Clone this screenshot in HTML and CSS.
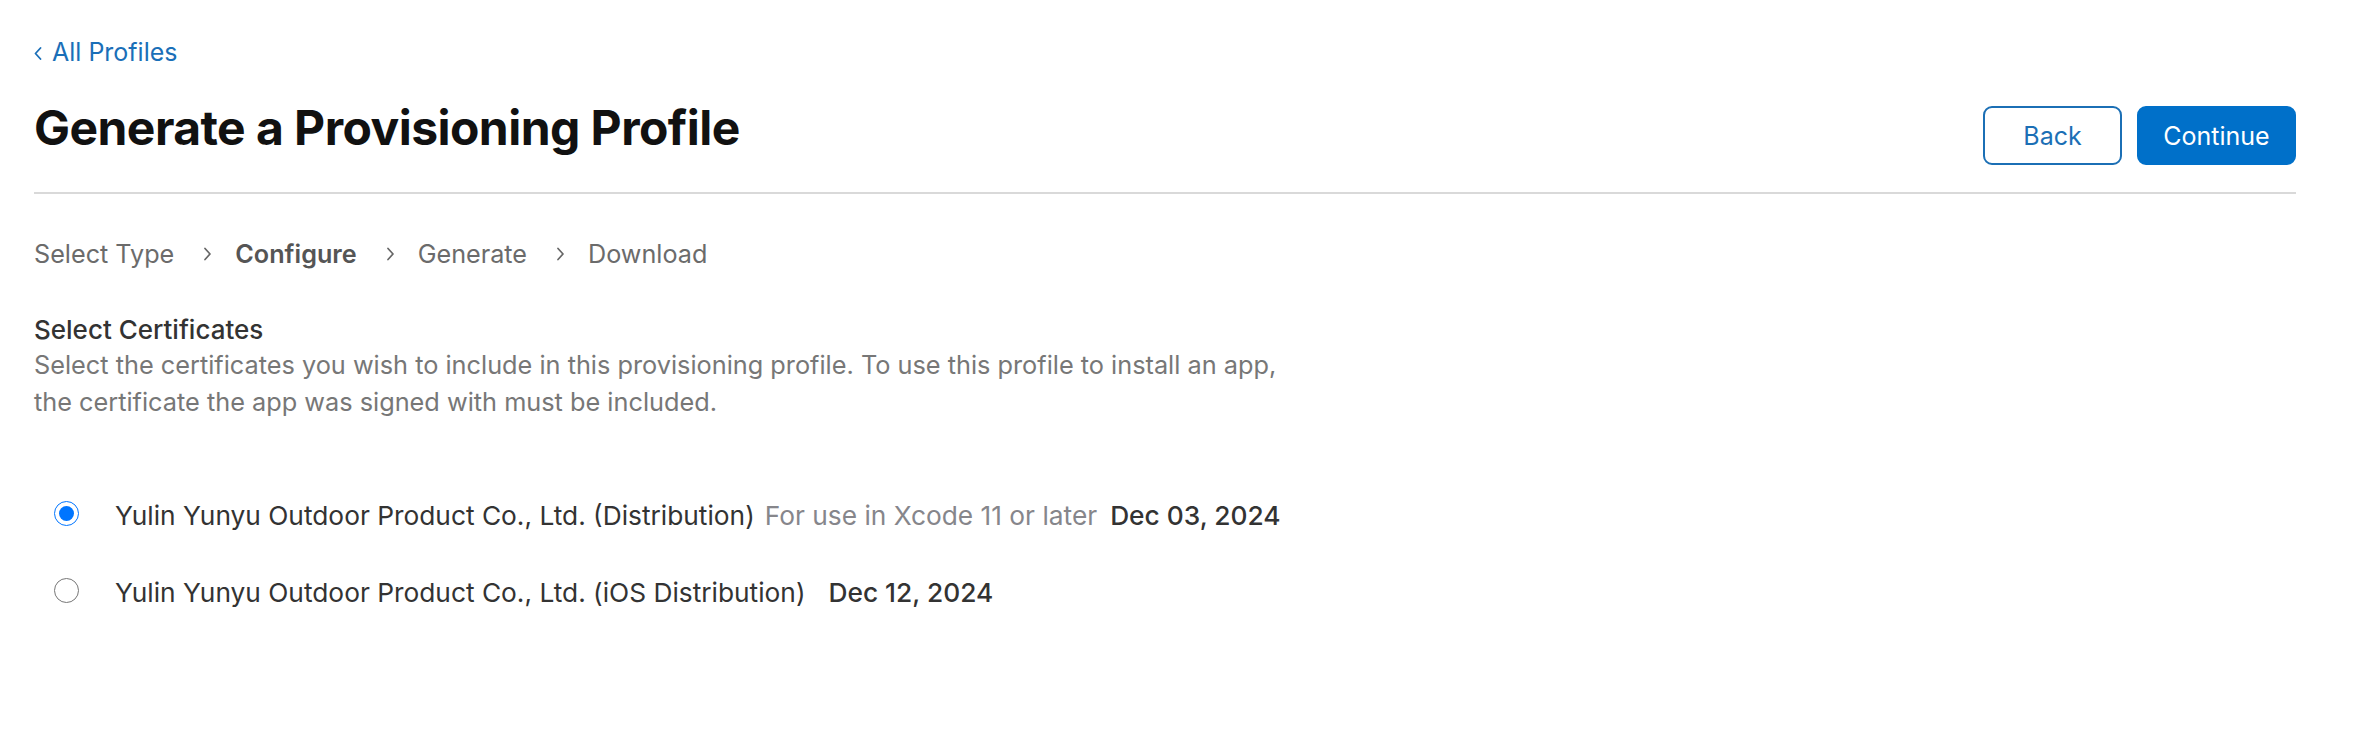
FILE: index.html
```html
<!DOCTYPE html>
<html lang="en">
<head>
<meta charset="utf-8">
<title>Generate a Provisioning Profile</title>
<link rel="stylesheet" href="styles.css">
</head>
<body>
<main class="page">
  <a class="back-link" href="#">
    <svg class="back-chev" width="8" height="13" viewBox="0 0 8 13"><path d="M6.5 1 L1.5 6.5 L6.5 12" fill="none" stroke="currentColor" stroke-width="1.8" stroke-linecap="round" stroke-linejoin="round"/></svg>
    <span>All Profiles</span>
  </a>
  <header class="header">
    <h1 class="title">Generate a Provisioning Profile</h1>
    <div class="actions">
      <button class="btn btn-secondary">Back</button>
      <button class="btn btn-primary">Continue</button>
    </div>
  </header>

  <nav class="steps">
    <span class="step">Select Type</span>
    <svg class="chev" width="9" height="14" viewBox="0 0 9 14"><path d="M2 1.5 L7 7 L2 12.5" fill="none" stroke="currentColor" stroke-width="1.7" stroke-linecap="round" stroke-linejoin="round"/></svg>
    <span class="step step-current">Configure</span>
    <svg class="chev" width="9" height="14" viewBox="0 0 9 14"><path d="M2 1.5 L7 7 L2 12.5" fill="none" stroke="currentColor" stroke-width="1.7" stroke-linecap="round" stroke-linejoin="round"/></svg>
    <span class="step">Generate</span>
    <svg class="chev" width="9" height="14" viewBox="0 0 9 14"><path d="M2 1.5 L7 7 L2 12.5" fill="none" stroke="currentColor" stroke-width="1.7" stroke-linecap="round" stroke-linejoin="round"/></svg>
    <span class="step">Download</span>
  </nav>

  <section class="section">
    <h2 class="section-title">Select Certificates</h2>
    <p class="section-desc">Select the certificates you wish to include in this provisioning profile. To use this profile to install an app,<br>the certificate the app was signed with must be included.</p>

    <div class="cert-list">
      <label class="cert">
        <input class="cert-radio" type="radio" name="cert" checked>
        <span class="cert-name">Yulin Yunyu Outdoor Product Co., Ltd. (Distribution)</span>
        <span class="cert-note">For use in Xcode 11 or later</span>
        <span class="cert-date">Dec 03, 2024</span>
      </label>
      <label class="cert">
        <input class="cert-radio" type="radio" name="cert">
        <span class="cert-name">Yulin Yunyu Outdoor Product Co., Ltd. (iOS Distribution)</span>
        <span class="cert-note"></span>
        <span class="cert-date">Dec 12, 2024</span>
      </label>
    </div>
  </section>
</main>
</body>
</html>
```

FILE: styles.css
```css
* { box-sizing: border-box; }

html, body {
  margin: 0;
  background: #ffffff;
}

body {
  font-family: Inter, "Noto Sans", "Liberation Sans", sans-serif;
  color: #333333;
  -webkit-font-smoothing: antialiased;
}

.page {
  padding: 34px 70px 0 34px;
}

.back-link {
  display: inline-flex;
  align-items: center;
  gap: 10px;
  font-size: 25px;
  line-height: 36px;
  color: #1a6fb8;
  text-decoration: none;
}

.back-chev {
  display: block;
  margin-top: 2px;
}

.header {
  display: flex;
  justify-content: space-between;
  align-items: flex-start;
  margin-top: 29px;
  padding-bottom: 27px;
  border-bottom: 2px solid #d9d9d9;
}

.title {
  margin: 0;
  font-size: 48px;
  line-height: 57.6px;
  font-weight: 700;
  letter-spacing: -0.55px;
  color: #111111;
}

.actions {
  display: flex;
  gap: 15px;
  margin-top: 7px;
}

.btn {
  height: 59px;
  border-radius: 9px;
  font-family: inherit;
  font-size: 25px;
  font-weight: 400;
  cursor: pointer;
}

.btn-secondary {
  width: 139px;
  background: #ffffff;
  border: 2px solid #1b6fb5;
  color: #1b6fb5;
}

.btn-primary {
  width: 159px;
  background: #0070c9;
  border: 2px solid #0070c9;
  color: #ffffff;
}

.steps {
  display: flex;
  align-items: center;
  margin-top: 42px;
  font-size: 25.2px;
  line-height: 36px;
  color: #6b6b6b;
}

.chev {
  display: block;
  margin: 0 23px 0 29px;
  color: #666666;
}

.step-current {
  font-weight: 600;
  color: #555555;
}

.section {
  margin-top: 42px;
}

.section-title {
  margin: 0;
  font-size: 26px;
  line-height: 32px;
  font-weight: 500;
  color: #333333;
}

.section-desc {
  margin: 0;
  font-size: 25.3px;
  line-height: 37px;
  color: #777777;
}

.cert-list {
  display: flex;
  flex-direction: column;
  gap: 39px;
  margin-top: 77px;
}

.cert {
  display: flex;
  align-items: flex-start;
  font-size: 26.3px;
  line-height: 38px;
  color: #333333;
}

.cert-radio {
  width: 25px;
  height: 25px;
  margin: 4px 36px 0 20px;
  flex: none;
}

.cert-note {
  margin-left: 10px;
  color: #86868b;
}

.cert-date {
  margin-left: 13px;
  font-weight: 500;
  color: #333333;
}
```
